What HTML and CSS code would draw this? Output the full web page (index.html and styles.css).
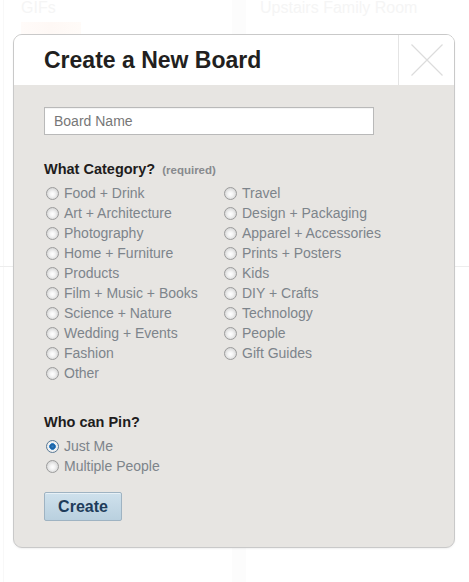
FILE: index.html
```html
<!DOCTYPE html>
<html>
<head>
<meta charset="utf-8">
<link rel="stylesheet" href="styles.css">
</head>
<body>
<div class="page">
  <div class="bg-col bg-left">
    <div class="bg-title">GIFs</div>
    <div class="bg-thumb"></div>
  </div>
  <div class="bg-col bg-right">
    <div class="bg-title">Upstairs Family Room</div>
  </div>
  <div class="bg-rule"></div>
</div>

<div class="modal">
  <div class="modal-head">
    <h1 class="modal-title">Create a New Board</h1>
    <button class="close" aria-label="Close">
      <svg width="32" height="32" viewBox="0 0 32 32"><path d="M0.5 0.5 L31.5 31.5 M31.5 0.5 L0.5 31.5" stroke="#dcdcdc" stroke-width="1.2" fill="none"/></svg>
    </button>
  </div>
  <div class="modal-body">
    <input class="name-input" type="text" placeholder="Board Name">

    <div class="section-label">What Category? <span class="req">(required)</span></div>
    <div class="cat-grid">
      <div class="cat-col">
        <label class="opt"><input type="radio" name="cat"><span>Food + Drink</span></label>
        <label class="opt"><input type="radio" name="cat"><span>Art + Architecture</span></label>
        <label class="opt"><input type="radio" name="cat"><span>Photography</span></label>
        <label class="opt"><input type="radio" name="cat"><span>Home + Furniture</span></label>
        <label class="opt"><input type="radio" name="cat"><span>Products</span></label>
        <label class="opt"><input type="radio" name="cat"><span>Film + Music + Books</span></label>
        <label class="opt"><input type="radio" name="cat"><span>Science + Nature</span></label>
        <label class="opt"><input type="radio" name="cat"><span>Wedding + Events</span></label>
        <label class="opt"><input type="radio" name="cat"><span>Fashion</span></label>
        <label class="opt"><input type="radio" name="cat"><span>Other</span></label>
      </div>
      <div class="cat-col">
        <label class="opt"><input type="radio" name="cat"><span>Travel</span></label>
        <label class="opt"><input type="radio" name="cat"><span>Design + Packaging</span></label>
        <label class="opt"><input type="radio" name="cat"><span>Apparel + Accessories</span></label>
        <label class="opt"><input type="radio" name="cat"><span>Prints + Posters</span></label>
        <label class="opt"><input type="radio" name="cat"><span>Kids</span></label>
        <label class="opt"><input type="radio" name="cat"><span>DIY + Crafts</span></label>
        <label class="opt"><input type="radio" name="cat"><span>Technology</span></label>
        <label class="opt"><input type="radio" name="cat"><span>People</span></label>
        <label class="opt"><input type="radio" name="cat"><span>Gift Guides</span></label>
      </div>
    </div>

    <div class="section-label who">Who can Pin?</div>
    <div class="who-list">
      <label class="opt"><input type="radio" name="who" checked><span>Just Me</span></label>
      <label class="opt"><input type="radio" name="who"><span>Multiple People</span></label>
    </div>

    <button class="create-btn">Create</button>
  </div>
</div>
</body>
</html>
```

FILE: styles.css
```css
html, body {
  margin: 0;
  padding: 0;
  background: #ffffff;
  font-family: "Liberation Sans", Arial, sans-serif;
}

.page {
  position: relative;
  width: 469px;
  height: 582px;
  overflow: hidden;
  display: flex;
}

.bg-col {
  height: 100%;
  box-sizing: border-box;
}

.bg-left {
  width: 229px;
  padding: 0 0 0 17px;
  border-left: 1px solid #f8f8f8;
  margin-left: 3px;
}

.bg-right {
  width: 237px;
  padding-left: 28px;
  background: linear-gradient(to right, #fcfcfc 0, #fcfcfc 14px, #ffffff 14px);
}

.bg-title {
  font-size: 16px;
  color: #f5f5f5;
  line-height: 16px;
  margin-top: 0;
}

.bg-thumb {
  width: 60px;
  height: 12px;
  margin-top: 6px;
  background: linear-gradient(to right, #fffbf9, #fef8f5 50%, #fffbf8);
}

.bg-rule {
  position: absolute;
  left: 0;
  right: 0;
  top: 266px;
  height: 1px;
  background: #ededed;
}

.modal {
  position: absolute;
  left: 13px;
  top: 34px;
  width: 442px;
  height: 514px;
  box-sizing: border-box;
  border: 1px solid #c9c9c9;
  border-radius: 9px;
  background: #e7e5e2;
  overflow: hidden;
  box-shadow: 0 1px 2px rgba(0,0,0,0.06);
}

.modal-head {
  height: 50px;
  background: #ffffff;
  display: flex;
  align-items: stretch;
}

.modal-title {
  flex: 1;
  margin: 0;
  padding-left: 30px;
  font-size: 23px;
  font-weight: bold;
  color: #221f20;
  line-height: 50px;
}

.close {
  width: 56px;
  padding: 0;
  margin: 0;
  border: 0;
  border-left: 1px solid #e4e4e4;
  background: #ffffff;
  display: flex;
  align-items: center;
  justify-content: center;
}

.close svg {
  display: block;
}

.modal-body {
  padding: 22px 30px 0 30px;
}

.name-input {
  display: block;
  width: 330px;
  height: 28px;
  box-sizing: border-box;
  margin: 0;
  border: 1px solid #b9b9b9;
  background: #ffffff;
  padding: 0 9px;
  font-family: "Liberation Sans", Arial, sans-serif;
  font-size: 14px;
  color: #333;
  box-shadow: inset 0 1px 1px rgba(0,0,0,0.05);
  outline: none;
}

.name-input::placeholder {
  color: #777777;
}

.section-label {
  margin-top: 25px;
  font-size: 14.5px;
  font-weight: bold;
  color: #211c1c;
  line-height: 18px;
}

.req {
  margin-left: 3px;
  font-size: 11.5px;
  color: #888a8e;
}

.cat-grid {
  display: grid;
  grid-template-columns: 178px 1fr;
  margin-top: 4px;
}

.opt {
  display: flex;
  align-items: center;
  height: 20px;
  font-size: 14px;
  color: #7d848b;
}

.opt input {
  -webkit-appearance: none;
  appearance: none;
  width: 13px;
  height: 13px;
  margin: 0 5px 0 2px;
  border-radius: 50%;
  border: 1px solid #9c9c9c;
  box-sizing: border-box;
  background: radial-gradient(circle at 50% 55%, #ffffff 0, #f4f4f4 30%, #d6d6d6 75%, #cfcfcf 100%);
  flex: none;
}

.opt input:checked {
  border-color: #5a7a96;
  background: radial-gradient(circle at 50% 50%, #2f7fc8 0, #1c5f9e 28%, #3a8ad0 40%, #e9eef2 46%, #f2f2f2 60%, #d2d2d2 100%);
}

.section-label.who {
  margin-top: 30px;
}

.who-list {
  margin-top: 5px;
}

.create-btn {
  margin-top: 16px;
  width: 78px;
  height: 29px;
  box-sizing: border-box;
  border: 1px solid #9fb3c2;
  border-radius: 2px;
  background: linear-gradient(to bottom, #cfe1ec 0%, #b9d0df 100%);
  font-family: "Liberation Sans", Arial, sans-serif;
  font-size: 16px;
  font-weight: bold;
  color: #1e3c5a;
  padding: 0;
  box-shadow: inset 0 1px 0 rgba(255,255,255,0.5);
}
```
